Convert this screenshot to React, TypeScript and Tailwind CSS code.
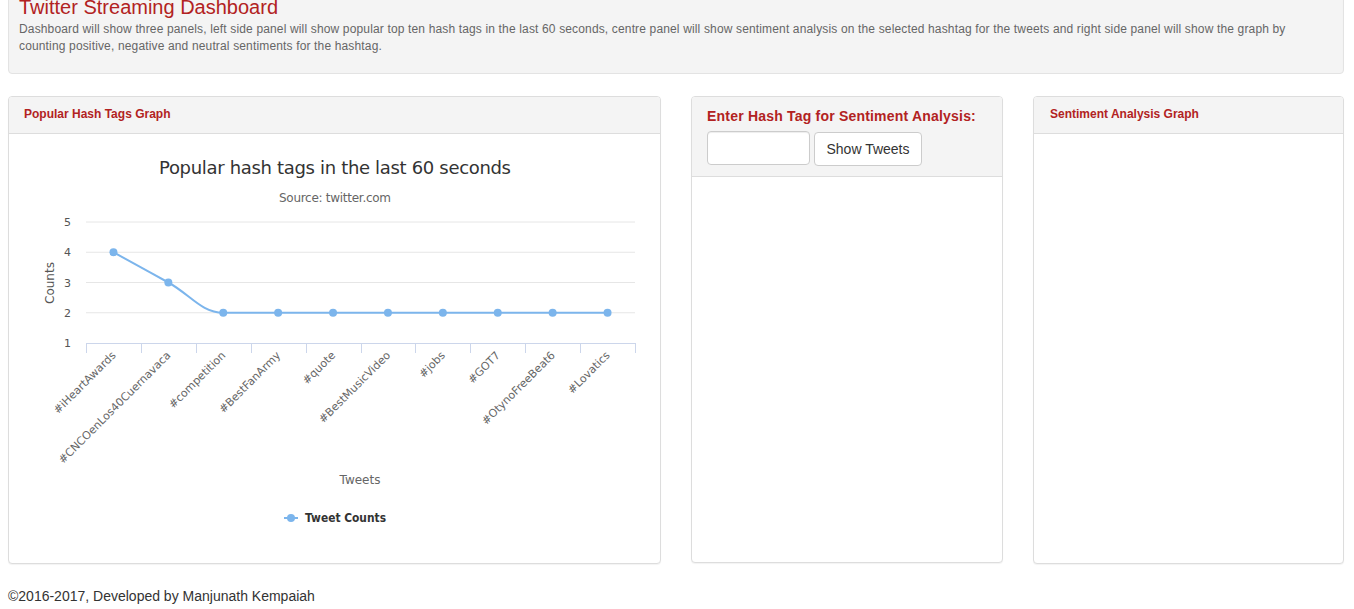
import React from "react";

const tags = [
    "#iHeartAwards",
    "#CNCOenLos40Cuernavaca",
    "#competition",
    "#BestFanArmy",
    "#quote",
    "#BestMusicVideo",
    "#jobs",
    "#GOT7",
    "#OtynoFreeBeat6",
    "#Lovatics",
];
const counts = [4, 3, 2, 2, 2, 2, 2, 2, 2, 2];

// plot area, in chart (panel body) coordinates
const plotLeft = 77;
const plotRight = 626;
const plotTop = 88;
const plotBottom = 209;
const step = (plotRight - plotLeft) / tags.length;
const yFor = (v: number) => plotBottom - ((v - 1) / 4) * (plotBottom - plotTop);
const xFor = (i: number) => plotLeft + step * (i + 0.5);

function splinePath() {
    const pts = counts.map((v, i) => ({ x: xFor(i), y: yFor(v) }));
    const sm = 1.5;
    const conts = pts.map((p, i) => {
        const last = pts[i - 1];
        const next = pts[i + 1];
        if (!last || !next) return { lx: p.x, ly: p.y, rx: p.x, ry: p.y };
        let lx = (sm * p.x + last.x) / (sm + 1);
        let ly = (sm * p.y + last.y) / (sm + 1);
        let rx = (sm * p.x + next.x) / (sm + 1);
        let ry = (sm * p.y + next.y) / (sm + 1);
        const corr = ((ry - ly) * (rx - p.x)) / (rx - lx) + p.y - ry;
        ly += corr;
        ry += corr;
        if (ly > Math.max(last.y, p.y)) { ly = Math.max(last.y, p.y); ry = 2 * p.y - ly; }
        else if (ly < Math.min(last.y, p.y)) { ly = Math.min(last.y, p.y); ry = 2 * p.y - ly; }
        if (ry > Math.max(next.y, p.y)) { ry = Math.max(next.y, p.y); ly = 2 * p.y - ry; }
        else if (ry < Math.min(next.y, p.y)) { ry = Math.min(next.y, p.y); ly = 2 * p.y - ry; }
        return { lx, ly, rx, ry };
    });
    let d = `M ${pts[0].x} ${pts[0].y}`;
    for (let i = 1; i < pts.length; i++) {
        d += ` C ${conts[i - 1].rx} ${conts[i - 1].ry} ${conts[i].lx} ${conts[i].ly} ${pts[i].x} ${pts[i].y}`;
    }
    return d;
}

function HashTagChart() {
    const font = "'DejaVu Sans', 'Open Sans', sans-serif";
    return (
        <svg width="651" height="428" style={{ fontFamily: font }}>
            <text x="326" y="40" textAnchor="middle" fontSize="18" fill="#333333" textLength="352">
                Popular hash tags in the last 60 seconds
            </text>
            <text x="326" y="68" textAnchor="middle" fontSize="12" fill="#666666" textLength="112">
                Source: twitter.com
            </text>

            {[1, 2, 3, 4, 5].map((v) => (
                <g key={v}>
                    {v > 1 && (
                        <line x1={plotLeft} x2={plotRight} y1={yFor(v)} y2={yFor(v)} stroke="#e6e6e6" strokeWidth="1" />
                    )}
                    <text x="62" y={yFor(v) + 4} textAnchor="end" fontSize="11" fill="#555555">
                        {v}
                    </text>
                </g>
            ))}

            <text x="45" y="149" textAnchor="middle" fontSize="12" fill="#555555" transform="rotate(-90 45 149)">
                Counts
            </text>

            <line x1={plotLeft} x2={plotRight} y1={plotBottom + 0.5} y2={plotBottom + 0.5} stroke="#ccd6eb" />
            {Array.from({ length: tags.length + 1 }).map((_, k) => {
                const x = Math.round(plotLeft + step * k) + 0.5;
                return <line key={k} x1={x} x2={x} y1={plotBottom} y2={plotBottom + 10} stroke="#ccd6eb" />;
            })}

            {tags.map((t, i) => {
                const ax = xFor(i) + 3;
                const ay = plotBottom + 13;
                return (
                    <text key={t} x={ax} y={ay} textAnchor="end" fontSize="11" fill="#666666" transform={`rotate(-45 ${ax} ${ay})`}>
                        {t}
                    </text>
                );
            })}

            <path d={splinePath()} fill="none" stroke="#7cb5ec" strokeWidth="2" />
            {counts.map((v, i) => (
                <circle key={i} cx={xFor(i)} cy={yFor(v)} r="4" fill="#7cb5ec" />
            ))}

            <text x="351" y="350" textAnchor="middle" fontSize="12" fill="#666666">
                Tweets
            </text>

            <line x1="275" x2="289" y1="384" y2="384" stroke="#7cb5ec" strokeWidth="2" />
            <circle cx="282" cy="384" r="4" fill="#7cb5ec" />
            <text x="296" y="388" fontSize="12" fontWeight="bold" fill="#333333" textLength="81" lengthAdjust="spacingAndGlyphs">
                Tweet Counts
            </text>
        </svg>
    );
}

export default function App() {
    return (
        <div className="min-h-[609px] bg-white pl-2 font-['Liberation_Sans',Arial,sans-serif] text-[14px] text-[#333]">
            <div className="w-[1336px]">
                <div className="-mt-[8px] rounded-[4px] border border-[#e3e3e3] bg-[#f4f4f4] px-[10px] pb-[18px] pt-[3px] shadow-[inset_0_1px_1px_rgba(0,0,0,0.05)]">
                    <h1 className="text-[20px] leading-[22px] text-[#b22222]">Twitter Streaming Dashboard</h1>
                    <p className="mt-[3px] text-[12px] leading-[17px] tracking-[0.15px] text-[#666]">
                        Dashboard will show three panels, left side panel will show popular top ten hash tags in the last 60 seconds, centre panel will show sentiment analysis on the selected hashtag for the tweets and right side panel will show the graph by counting positive, negative and neutral sentiments for the hashtag.
                    </p>
                </div>

                <div className="mt-[22px] flex gap-[30px]">
                    <div className="h-[468px] w-[653px] overflow-hidden rounded-[4px] border border-[#ddd] bg-white shadow-[0_1px_1px_rgba(0,0,0,0.05)]">
                        <div className="flex h-[37px] items-center border-b border-[#ddd] bg-[#f4f4f4] px-[15px] pb-[2px]">
                            <h3 className="text-[12px] font-bold text-[#b22222]">Popular Hash Tags Graph</h3>
                        </div>
                        <HashTagChart />
                    </div>

                    <div className="h-[467px] w-[312px] overflow-hidden rounded-[4px] border border-[#ddd] bg-white shadow-[0_1px_1px_rgba(0,0,0,0.05)]">
                        <div className="h-[80px] border-b border-[#ddd] bg-[#f4f4f4] px-[15px] pt-[9px]">
                            <label className="block text-[14px] font-bold leading-[20px] tracking-[0.2px] text-[#b22222]">
                                Enter Hash Tag for Sentiment Analysis:
                            </label>
                            <div className="mt-[5px] flex items-start gap-[4px]">
                                <input className="h-[34px] w-[103px] rounded-[4px] border border-[#ccc] bg-white px-2 shadow-[inset_0_1px_1px_rgba(0,0,0,0.075)] outline-none" />
                                <button className="mt-[1px] h-[34px] w-[108px] rounded-[4px] border border-[#ccc] bg-white text-[14px] text-[#333]">
                                    Show Tweets
                                </button>
                            </div>
                        </div>
                    </div>

                    <div className="h-[468px] w-[311px] overflow-hidden rounded-[4px] border border-[#ddd] bg-white shadow-[0_1px_1px_rgba(0,0,0,0.05)]">
                        <div className="flex h-[37px] items-center border-b border-[#ddd] bg-[#f4f4f4] px-[16px] pb-[2px]">
                            <h3 className="text-[12px] font-bold text-[#b22222]">Sentiment Analysis Graph</h3>
                        </div>
                    </div>
                </div>

                <footer className="mt-[22px] text-[14px] leading-[20px] text-[#333]">
                    ©2016-2017, Developed by Manjunath Kempaiah
                </footer>
            </div>
        </div>
    );
}
